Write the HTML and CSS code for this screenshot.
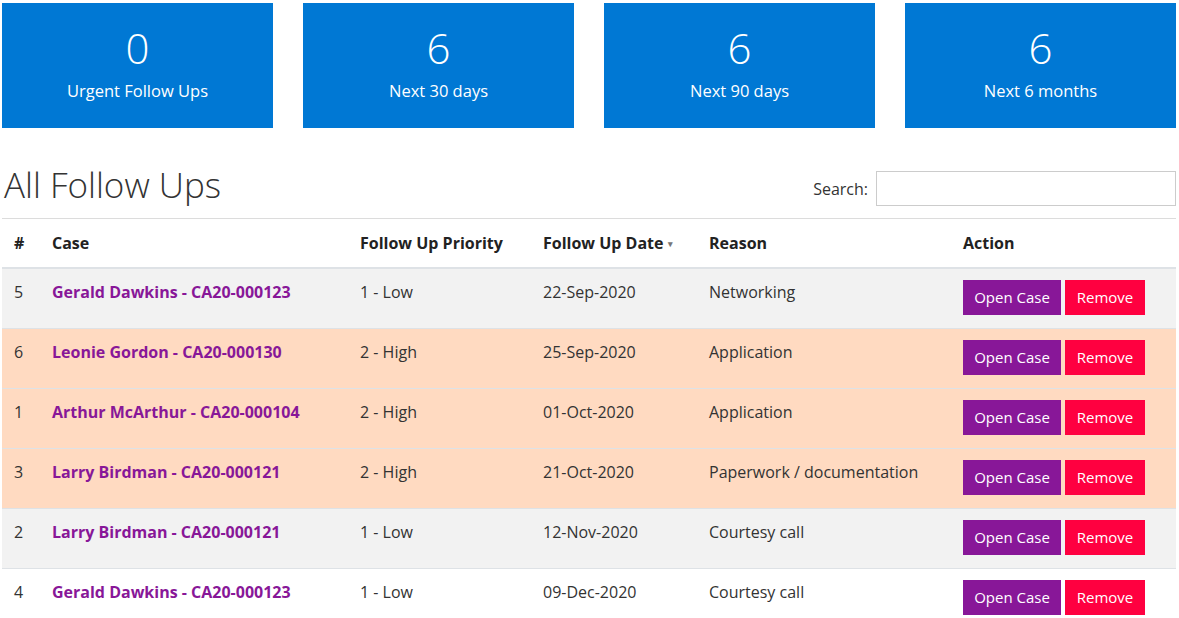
FILE: index.html
```html
<!DOCTYPE html>
<html>
<head>
<meta charset="utf-8">
<link rel="stylesheet" href="styles.css">
</head>
<body>
<div class="page">
  <div class="tiles">
    <div class="tile"><div class="tile-num">0</div><div class="tile-label">Urgent Follow Ups</div></div>
    <div class="tile"><div class="tile-num">6</div><div class="tile-label">Next 30 days</div></div>
    <div class="tile"><div class="tile-num">6</div><div class="tile-label">Next 90 days</div></div>
    <div class="tile"><div class="tile-num">6</div><div class="tile-label">Next 6 months</div></div>
  </div>
  <div class="section-head">
    <h1 class="title">All Follow Ups</h1>
    <label class="search"><span>Search:</span><input type="text" class="search-input"></label>
  </div>
  <table class="grid">
    <colgroup>
      <col class="c-num"><col class="c-case"><col class="c-pri"><col class="c-date"><col class="c-reason"><col class="c-action">
    </colgroup>
    <thead>
      <tr><th>#</th><th>Case</th><th>Follow Up Priority</th><th>Follow Up Date <span class="caret">&#9662;</span></th><th>Reason</th><th>Action</th></tr>
    </thead>
    <tbody>
      <tr class="gray"><td>5</td><td><a class="case">Gerald Dawkins - CA20-000123</a></td><td>1 - Low</td><td>22-Sep-2020</td><td>Networking</td><td class="actions"><button class="btn open">Open Case</button><button class="btn remove">Remove</button></td></tr>
      <tr class="peach"><td>6</td><td><a class="case">Leonie Gordon - CA20-000130</a></td><td>2 - High</td><td>25-Sep-2020</td><td>Application</td><td class="actions"><button class="btn open">Open Case</button><button class="btn remove">Remove</button></td></tr>
      <tr class="peach"><td>1</td><td><a class="case">Arthur McArthur - CA20-000104</a></td><td>2 - High</td><td>01-Oct-2020</td><td>Application</td><td class="actions"><button class="btn open">Open Case</button><button class="btn remove">Remove</button></td></tr>
      <tr class="peach"><td>3</td><td><a class="case">Larry Birdman - CA20-000121</a></td><td>2 - High</td><td>21-Oct-2020</td><td>Paperwork / documentation</td><td class="actions"><button class="btn open">Open Case</button><button class="btn remove">Remove</button></td></tr>
      <tr class="gray"><td>2</td><td><a class="case">Larry Birdman - CA20-000121</a></td><td>1 - Low</td><td>12-Nov-2020</td><td>Courtesy call</td><td class="actions"><button class="btn open">Open Case</button><button class="btn remove">Remove</button></td></tr>
      <tr class="white"><td>4</td><td><a class="case">Gerald Dawkins - CA20-000123</a></td><td>1 - Low</td><td>09-Dec-2020</td><td>Courtesy call</td><td class="actions"><button class="btn open">Open Case</button><button class="btn remove">Remove</button></td></tr>
    </tbody>
  </table>
</div>
</body>
</html>
```

FILE: styles.css
```css
* { box-sizing: border-box; }
html, body { margin: 0; padding: 0; background: #fff; }
body {
  font-family: "Open Sans", "Noto Sans", sans-serif;
  font-size: 16px;
  color: #333;
}
.page { padding: 3px 3px 0 2px; }
.tiles {
  display: grid;
  grid-template-columns: repeat(4, 271px);
  column-gap: 30px;
}
.tile {
  background: #0078d4;
  color: #fff;
  height: 125px;
  display: flex;
  flex-direction: column;
  align-items: center;
  padding-top: 20px;
}
.tile-num {
  font-size: 42px;
  font-weight: 300;
  line-height: 50px;
}
.tile-label {
  font-size: 16.5px;
  line-height: 24px;
  margin-top: 6px;
}
.section-head {
  display: flex;
  justify-content: space-between;
  align-items: flex-end;
  margin-top: 22px;
  height: 69px;
  border-bottom: 1px solid #dcdcdc;
  padding-bottom: 12px;
}
.title {
  margin: 0;
  font-size: 35px;
  font-weight: 300;
  color: #333;
  padding-left: 2px;
  line-height: 43px;
}
.search {
  display: flex;
  align-items: center;
  gap: 8px;
  font-size: 16px;
  color: #333;
}
.search-input {
  width: 300px;
  height: 35px;
  border: 1px solid #ccc;
  margin: 0;
  padding: 0 6px;
}
.grid {
  width: 1174px;
  border-collapse: collapse;
  table-layout: fixed;
}
.c-num { width: 38px; }
.c-case { width: 308px; }
.c-pri { width: 183px; }
.c-date { width: 166px; }
.c-reason { width: 254px; }
.c-action { width: 225px; }
.grid th, .grid td {
  text-align: left;
  vertical-align: top;
  padding: 12px;
  line-height: 24px;
}
.grid th {
  font-weight: 700;
  color: #222;
  border-bottom: 2px solid #dee2e6;
  padding: 12px 12px 11px;
}
.grid td {
  border-top: 1px solid #dee2e6;
  padding: 11px 12px 13px;
}
.grid td.actions { padding: 11px 12px 13px; line-height: 35px; }
.grid tbody tr:first-child td { border-top: 0; }
.caret { color: #777; font-size: 9px; vertical-align: 2px; margin-left: 0; }
tr.gray td { background: #f2f2f2; }
tr.peach td { background: #ffdac1; }
tr.white td { background: #fff; }
.case {
  color: #881798;
  font-weight: 700;
  text-decoration: none;
}
.btn {
  font-family: inherit;
  font-size: 15px;
  color: #fff;
  border: 0;
  height: 35px;
  padding: 0;
  margin: 0 4px 0 0;
  vertical-align: top;
  line-height: 35px;
}
.btn.open { background: #881798; width: 98px; }
.btn.remove { background: #ff0040; width: 80px; }
```
